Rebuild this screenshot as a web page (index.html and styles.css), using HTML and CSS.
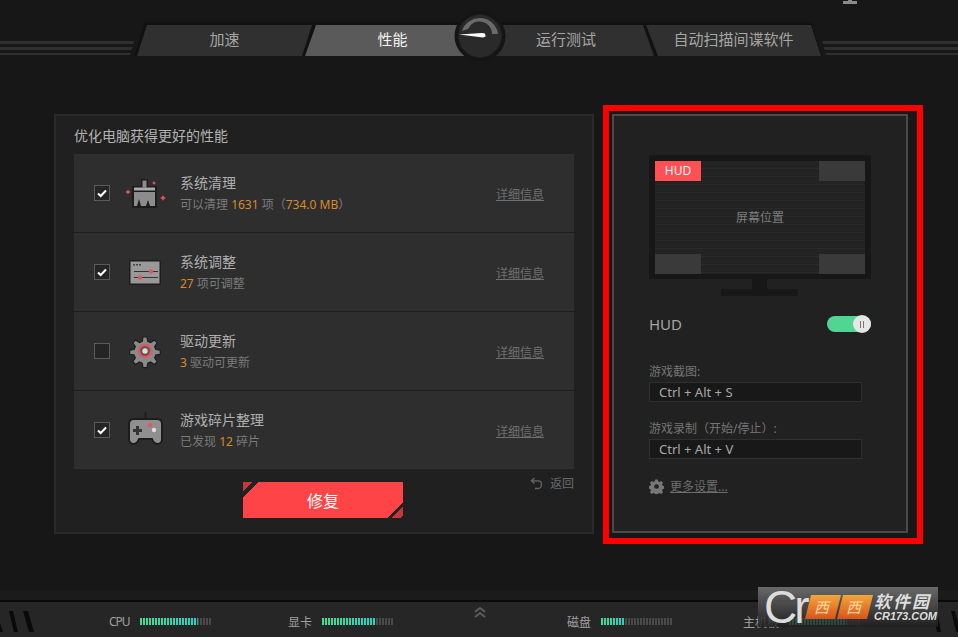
FILE: index.html
```html
<!DOCTYPE html>
<html lang="zh-CN">
<head>
    <meta charset="UTF-8">
    <title>性能</title>
    <link rel="stylesheet" href="styles.css">
</head>
<body>
    <div class="header">
        <svg class="top-icon" width="14" height="4" viewBox="0 0 14 4"><path d="M5 0h4v1h5v3H0V1h5z" fill="#8a8a8a"/></svg>
        <div class="stripes stripes-left"></div>
        <div class="tabs-wrap">
            <div class="tabs">
                <div class="tab tab-first">加速</div>
                <div class="tab tab-second active">性能</div>
                <div class="tab tab-third">运行测试</div>
                <div class="tab tab-fourth">自动扫描间谍软件</div>
            </div>
            <svg class="gauge" width="52" height="52" viewBox="0 0 52 52">
                <circle cx="26" cy="26" r="25.500" fill="#151515"/>
                <circle cx="26" cy="26" r="21.500" fill="#2a2a2a" stroke="#202020" stroke-width="1"/>
                <path d="M8 21A18.500 18.500 0 0 1 44 24h-6A12.500 12.500 0 0 0 14 19z" fill="#6a6a6a"/>
                <path d="M5 24.500L28 23l3 .6.600 2.900-2.600 1z" fill="#fff"/>
            </svg>
        </div>
        <div class="stripes stripes-right"></div>
    </div>

    <div class="main">
        <div class="panel">
            <div class="panel-title">优化电脑获得更好的性能</div>
            <div class="list">
                <div class="row">
                    <svg class="check" width="16" height="16" viewBox="0 0 16 16"><rect x=".5" y=".5" width="15" height="15" fill="#252525" stroke="#5a5a5a"/><path d="M4 8.500l2.700 2.500L12 5.500" fill="none" stroke="#fff" stroke-width="2"/></svg>
                    <svg class="row-icon" width="44" height="36" viewBox="0 0 44 36">
                        <path d="M17 4h7v7h9v22H8V11h9z" fill="#1c1c1c"/>
                        <path d="M18.500 5.500h4v7h-4z" fill="#8c8c8c"/>
                        <path d="M10 12.500h21v3H10z" fill="#aaa"/>
                        <path d="M10 17h21v14h-5l-2-6-2 6h-5l-2-7-2 7h-3z" fill="#8c8c8c"/>
                        <path d="M4 14.500l1 1.500 1.500 1-1.500 1-1 1.500-1-1.500-1.500-1 1.500-1zM30 6l.7 1.300L32 8l-1.300.7L30 10l-.7-1.300L28 8l1.300-.7zM39 20l1 2 2 1-2 1-1 2-1-2-2-1 2-1z" fill="#e8565a"/>
                    </svg>
                    <div class="row-text">
                        <div class="row-name">系统清理</div>
                        <div class="row-sub">可以清理 <span class="num">1631</span> 项（<span class="num">734.0 MB</span>）</div>
                    </div>
                    <a class="more-link">详细信息</a>
                </div>
                <div class="row">
                    <svg class="check" width="16" height="16" viewBox="0 0 16 16"><rect x=".5" y=".5" width="15" height="15" fill="#252525" stroke="#5a5a5a"/><path d="M4 8.500l2.700 2.500L12 5.500" fill="none" stroke="#fff" stroke-width="2"/></svg>
                    <svg class="row-icon" width="44" height="36" viewBox="0 0 44 36">
                        <rect x="5" y="6" width="32" height="25" rx="2" fill="#1c1c1c"/>
                        <rect x="6.500" y="7.500" width="29" height="22" fill="#999"/>
                        <path d="M9 10h2v1.500H9zM12 10h2v1.500h-2zM15 10h2v1.500h-2z" fill="#444"/>
                        <path d="M10 17.500h24M10 23.500h24" stroke="#333" stroke-width="1.200"/>
                        <circle cx="27" cy="17.500" r="2.200" fill="#e0555a"/>
                        <circle cx="16" cy="23.500" r="2.200" fill="#e0555a"/>
                    </svg>
                    <div class="row-text">
                        <div class="row-name">系统调整</div>
                        <div class="row-sub"><span class="num">27</span> 项可调整</div>
                    </div>
                    <a class="more-link">详细信息</a>
                </div>
                <div class="row">
                    <svg class="check" width="16" height="16" viewBox="0 0 16 16"><rect x=".5" y=".5" width="15" height="15" fill="#252525" stroke="#5a5a5a"/></svg>
                    <svg class="row-icon" width="44" height="36" viewBox="0 0 44 36">
                        <g transform="translate(21 18) scale(.8)">
                            <path fill="#8a8a8a" stroke="#1c1c1c" stroke-width="1.500" d="M-2.500-17.500h5l1 5.500 3.500 1.500 4.800-3.200 3.500 3.500-3.200 4.800 1.500 3.500 5.500 1v5l-5.500 1-1.500 3.500 3.200 4.800-3.500 3.500-4.800-3.200-3.500 1.500-1 5.500h-5l-1-5.500-3.500-1.500-4.800 3.200-3.500-3.500 3.200-4.800-1.500-3.500-5.500-1v-5l5.500-1 1.500-3.500-3.200-4.800 3.500-3.500 4.800 3.200 3.500-1.500z"/>
                            <circle r="9" fill="#e5555a"/>
                            <circle r="6" fill="#555"/>
                            <circle r="3.400" fill="#ddd"/>
                        </g>
                    </svg>
                    <div class="row-text">
                        <div class="row-name">驱动更新</div>
                        <div class="row-sub"><span class="num">3</span> 驱动可更新</div>
                    </div>
                    <a class="more-link">详细信息</a>
                </div>
                <div class="row">
                    <svg class="check" width="16" height="16" viewBox="0 0 16 16"><rect x=".5" y=".5" width="15" height="15" fill="#252525" stroke="#5a5a5a"/><path d="M4 8.500l2.700 2.500L12 5.500" fill="none" stroke="#fff" stroke-width="2"/></svg>
                    <svg class="row-icon" width="44" height="36" viewBox="0 0 44 36">
                        <path d="M20.500 0h2v7h-2z" fill="#1c1c1c"/>
                        <path d="M10 7h23c3 0 5 2 5 5v15c0 3-2 5-4.500 5-2.500 0-4-1-5.500-5H15c-1.500 4-3 5-5.500 5C7 32 5 30 5 27V12c0-3 2-5 5-5z" fill="#8f8f8f" stroke="#1c1c1c" stroke-width="2"/>
                        <path d="M12 14h3v3h3v3h-3v3h-3v-3H9v-3h3z" fill="#333"/>
                        <circle cx="26" cy="13" r="2.200" fill="#e5555a"/>
                        <circle cx="30" cy="18" r="2.200" fill="#ddd"/>
                    </svg>
                    <div class="row-text">
                        <div class="row-name">游戏碎片整理</div>
                        <div class="row-sub">已发现 <span class="num">12</span> 碎片</div>
                    </div>
                    <a class="more-link">详细信息</a>
                </div>
            </div>
            <div class="panel-actions">
                <button class="fix-btn">修复</button>
                <div class="back">
                    <svg width="13" height="13" viewBox="0 0 13 13"><path d="M4.500 1L1.500 3.800l3 2.700M2 3.800h6c2.200 0 3.500 1.500 3.500 3.700S10 11.500 8 11.500H5" fill="none" stroke="#666" stroke-width="1.300"/></svg>
                    返回
                </div>
            </div>
        </div>

        <div class="highlight">
            <div class="hud-panel">
                <div class="monitor">
                    <div class="screen">
                        <div class="screen-row">
                            <div class="slot slot-on">HUD</div>
                            <div class="slot"></div>
                        </div>
                        <div class="screen-label">屏幕位置</div>
                        <div class="screen-row">
                            <div class="slot"></div>
                            <div class="slot"></div>
                        </div>
                    </div>
                </div>
                <div class="neck"></div>
                <div class="base"></div>

                <div class="hud-row">
                    <span class="hud-name">HUD</span>
                    <div class="toggle"><div class="knob"><i></i><i></i></div></div>
                </div>

                <div class="field-label first">游戏截图:</div>
                <div class="field">Ctrl + Alt + S</div>
                <div class="field-label">游戏录制（开始/停止）:</div>
                <div class="field">Ctrl + Alt + V</div>

                <div class="settings">
                    <svg width="15" height="15" viewBox="-8 -8 16 16">
                        <path fill="#777" fill-rule="evenodd" d="M-1.400-7.500h2.800l.4 2 1.500.6 1.700-1.100 2 2-1.100 1.700.6 1.500 2 .4v2.800l-2 .4-.6 1.500 1.100 1.700-2 2-1.700-1.100-1.500.6-.4 2h-2.800l-.4-2-1.500-.6-1.700 1.100-2-2 1.100-1.700-.6-1.500-2-.4v-2.800l2-.4.6-1.500-1.100-1.700 2-2 1.700 1.100 1.500-.6zM0-2.500a2.500 2.500 0 1 0 0 5 2.500 2.500 0 0 0 0-5z"/>
                    </svg>
                    <a class="settings-link">更多设置...</a>
                </div>
            </div>
        </div>
    </div>

    <div class="footer">
        <div class="footer-band"></div>
        <div class="status">
            <svg class="slashes slashes-left" width="36" height="21" viewBox="0 0 36 21"><path d="M0 12l3 9H0zM9 0h4l5 21h-4zM23 0h5l6 21h-5z" fill="#0a0a0a"/></svg>
            <div class="stat"><span class="stat-latin">CPU</span><div class="meter" style="--fill:80%"></div></div>
            <div class="stat"><span>显卡</span><div class="meter" style="--fill:75%"></div></div>
            <svg class="chevron" width="14" height="12" viewBox="0 0 14 12"><path d="M2 6l5-4 5 4M2 11l5-4 5 4" fill="none" stroke="#5c5c5c" stroke-width="2"/></svg>
            <div class="stat"><span>磁盘</span><div class="meter" style="--fill:33%"></div></div>
            <div class="stat"><span>主机板</span><div class="meter" style="--fill:80%"></div></div>
            <svg class="slashes slashes-right" width="25" height="21" viewBox="0 0 25 21"><path d="M0 0h4l4 21H4zM18 0h4l3 12v9h-2z" fill="#0a0a0a"/></svg>
        </div>
    </div>

    <div class="watermark">
        <span class="wm-logo">Cr</span>
        <span class="wm-blocks"><b>西</b><b>西</b></span>
        <span class="wm-text">
            <span class="wm-name">软件园</span>
            <span class="wm-url">CR173.COM</span>
        </span>
    </div>
</body>
</html>
```

FILE: styles.css
```css
html, body {
    margin: 0;
    padding: 0;
    height: 100%;
}

body {
    width: 958px;
    height: 637px;
    overflow: hidden;
    position: relative;
    display: flex;
    flex-direction: column;
    background: #171717;
    font-family: "Noto Sans", "Noto Sans CJK SC", sans-serif;
    font-size: 12px;
    color: #a8a8a8;
    text-spacing-trim: space-all;
}

/* top tab strip */
.header {
    display: flex;
    height: 60px;
    flex-shrink: 0;
    position: relative;
}

.top-icon {
    position: absolute;
    top: 0;
    left: 843px;
}

.stripes {
    height: 14px;
    margin-top: 41px;
    background: repeating-linear-gradient(180deg, #2f2f2f 0 3px, #171717 3px 6px);
}

.stripes-left {
    width: 134px;
    clip-path: polygon(0 0, 100% 0, calc(100% - 4px) 100%, 0 100%);
}

.stripes-right {
    flex: 1;
    clip-path: polygon(0 0, 100% 0, 100% 100%, 4px 100%);
}

.tabs-wrap {
    position: relative;
    width: 688px;
    height: 34px;
    margin-top: 22px;
}

.tabs {
    display: flex;
    height: 100%;
    padding: 3px 0 0 3px;
    box-sizing: border-box;
    background: #111;
    clip-path: polygon(11px 0, 677px 0, 100% 100%, 0 100%);
}

.tab {
    height: 31px;
    line-height: 29px;
    width: 175px;
    flex-shrink: 0;
    text-align: center;
    font-size: 15px;
    background: #303030;
    color: #a6a6a6;
}

.tab.active {
    background: #5a5a5a;
    color: #f4f4f4;
}

.tab-first {
    clip-path: polygon(10px 0, 100% 0, calc(100% - 10px) 100%, 0 100%);
}

.tab-second {
    margin-left: -7px;
    clip-path: polygon(11px 0, 100% 0, 100% 100%, 0 100%);
}

.tab-third {
    width: 176px;
    margin-left: -2px;
    clip-path: polygon(0 0, calc(100% - 11px) 0, 100% 100%, 0 100%);
}

.tab-fourth {
    margin-left: -8px;
    clip-path: polygon(0 0, calc(100% - 10px) 0, 100% 100%, 12px 100%);
}

.gauge {
    position: absolute;
    left: 320px;
    top: -12px;
}

/* main area */
.main {
    flex: 1;
    display: flex;
    align-items: flex-start;
    gap: 9px;
    padding: 45px 0 0 54px;
}

.panel {
    width: 500px;
    margin-top: 9px;
    padding: 10px 18px 14px;
    background: #202020;
    border: 2px solid #2a2a2a;
}

.panel-title {
    font-size: 14px;
    line-height: 20px;
    color: #b4b4b4;
    margin-bottom: 8px;
}

.list {
    background: #2e2e2e;
}

.row {
    display: flex;
    align-items: center;
    height: 78px;
    padding: 0 30px 0 20px;
    border-bottom: 1px solid #1f1f1f;
}

.row:last-child {
    border-bottom: none;
}

.check {
    margin-right: 14px;
    flex-shrink: 0;
}

.row-icon {
    margin-right: 12px;
    flex-shrink: 0;
}

.row-text {
    padding-top: 1px;
}

.row-name {
    font-size: 14px;
    line-height: 20px;
    color: #aeaeae;
}

.row-sub {
    font-size: 12px;
    line-height: 20px;
    margin-top: 2px;
    color: #7b7b7b;
}

.num {
    color: #d98a2a;
}

.more-link {
    margin-left: auto;
    margin-top: 2px;
    font-size: 12px;
    color: #6e6e6e;
    text-decoration: underline;
}

.panel-actions {
    display: grid;
    grid-template-columns: 169px auto 1fr;
    margin-top: 13px;
}

.fix-btn {
    grid-column: 2;
    width: 160px;
    height: 36px;
    border: none;
    padding: 0;
    font-family: inherit;
    font-size: 16px;
    color: #fff;
    background:
        linear-gradient(135deg, #c03a3c 0 7px, #222 7px 11px, transparent 11px),
        linear-gradient(-45deg, #222 0 2px, #c03a3c 2px 8px, #222 8px 11px, transparent 11px),
        #ff4447;
}

.back {
    grid-column: 3;
    justify-self: end;
    display: flex;
    align-items: center;
    gap: 7px;
    height: 16px;
    margin-top: -7px;
    color: #6a6a6a;
}

/* red annotation box and HUD panel */
.highlight {
    width: 296px;
    height: 419px;
    padding: 3px 9px 5px 3px;
    border: 6px solid #fe0000;
}

.hud-panel {
    height: 100%;
    box-sizing: border-box;
    padding: 39px 35px 0;
    background: #212121;
    border: 2px solid #4a4a4a;
}

.monitor {
    width: 222px;
    height: 124px;
    box-sizing: border-box;
    padding: 6px 6px 5px;
    background: #171717;
}

.screen {
    height: 113px;
    display: flex;
    flex-direction: column;
    justify-content: space-between;
    background: repeating-linear-gradient(180deg, #232323 0 7px, #2a2a2a 7px 8px);
}

.screen-row {
    display: flex;
    justify-content: space-between;
}

.slot {
    width: 46px;
    height: 20px;
    line-height: 20px;
    text-align: center;
    background: #3a3a3a;
}

.slot-on {
    background: #ff5054;
    color: #f4f4f4;
}

.screen-label {
    text-align: center;
    padding-bottom: 2px;
    color: #7e7e7e;
}

.neck {
    width: 15px;
    height: 10px;
    margin-left: 103px;
    background: #171717;
}

.base {
    width: 77px;
    height: 7px;
    margin-left: 72px;
    background: #171717;
}

.hud-row {
    display: flex;
    justify-content: space-between;
    align-items: center;
    width: 222px;
    height: 20px;
    margin-top: 18px;
}

.hud-name {
    font-size: 15px;
    line-height: 20px;
    color: #a4a4a4;
}

.toggle {
    display: flex;
    justify-content: flex-end;
    align-items: center;
    width: 44px;
    height: 16px;
    border-radius: 8px;
    background: #50d593;
}

.knob {
    display: flex;
    justify-content: center;
    align-items: center;
    gap: 2px;
    width: 18px;
    height: 18px;
    border-radius: 50%;
    background: #e6e6e6;
}

.knob i {
    width: 1px;
    height: 7px;
    background: #777;
}

.field-label {
    margin-top: 18px;
    line-height: 18px;
    color: #757575;
}

.field-label.first {
    margin-top: 29px;
}

.field {
    width: 213px;
    height: 20px;
    line-height: 18px;
    box-sizing: border-box;
    padding-left: 9px;
    margin-top: 1px;
    font-size: 13px;
    background: #181818;
    border: 1px solid #2f2f2f;
    color: #a8a8a8;
}

.settings {
    display: flex;
    align-items: center;
    gap: 6px;
    margin-top: 18px;
}

.settings-link {
    color: #6e6e6e;
    text-decoration: underline;
}

/* bottom status bar */
.footer {
    flex-shrink: 0;
}

.footer-band {
    height: 10px;
    background: #1b1b1b;
    border-bottom: 2px solid #0a0a0a;
}

.status {
    position: relative;
    display: grid;
    grid-template-columns: 179px 185px 94px 176px auto;
    align-items: center;
    height: 35px;
    box-sizing: border-box;
    padding: 4px 0 0 109px;
    background: #262626;
}

.stat {
    display: flex;
    align-items: center;
    gap: 10px;
    color: #a0a0a0;
}

.stat-latin {
    letter-spacing: -1px;
}

.meter {
    width: 72px;
    height: 7px;
    background:
        repeating-linear-gradient(90deg, transparent 0 2px, #262626 2px 3px),
        linear-gradient(90deg, #3fe08f, #22d3c8) 0 0 / var(--fill) 100% no-repeat,
        #4a4a4a;
}

.chevron {
    align-self: start;
}

.slashes {
    position: absolute;
    top: 9px;
}

.slashes-left {
    left: 0;
}

.slashes-right {
    right: 0;
}

/* site watermark over the corner */
.watermark {
    position: absolute;
    left: 758px;
    top: 587px;
    width: 180px;
    height: 40px;
    display: flex;
    align-items: center;
    background: linear-gradient(180deg, rgba(112, 112, 112, 0.92), rgba(30, 30, 30, 0.8));
}

.wm-logo {
    width: 50px;
    padding-left: 6px;
    box-sizing: border-box;
    font-family: "Liberation Sans", sans-serif;
    font-size: 46px;
    line-height: 40px;
    letter-spacing: -3px;
    color: #dcdcdc;
}

.wm-blocks {
    display: flex;
    gap: 2px;
    width: 64px;
    transform: skewX(-14deg);
}

.wm-blocks b {
    width: 30px;
    height: 24px;
    line-height: 24px;
    text-align: center;
    font-size: 15px;
    font-weight: 400;
    color: #ffd9a0;
    background: linear-gradient(180deg, #f2a63a, #d8541e);
}

.wm-text {
    display: flex;
    flex-direction: column;
    margin-left: 2px;
    color: #dedede;
    font-style: italic;
}

.wm-name {
    font-size: 17px;
    font-weight: 700;
    line-height: 18px;
    letter-spacing: 2px;
}

.wm-url {
    font-family: "Liberation Sans", sans-serif;
    font-size: 11px;
    font-weight: 700;
    line-height: 11px;
}
```
